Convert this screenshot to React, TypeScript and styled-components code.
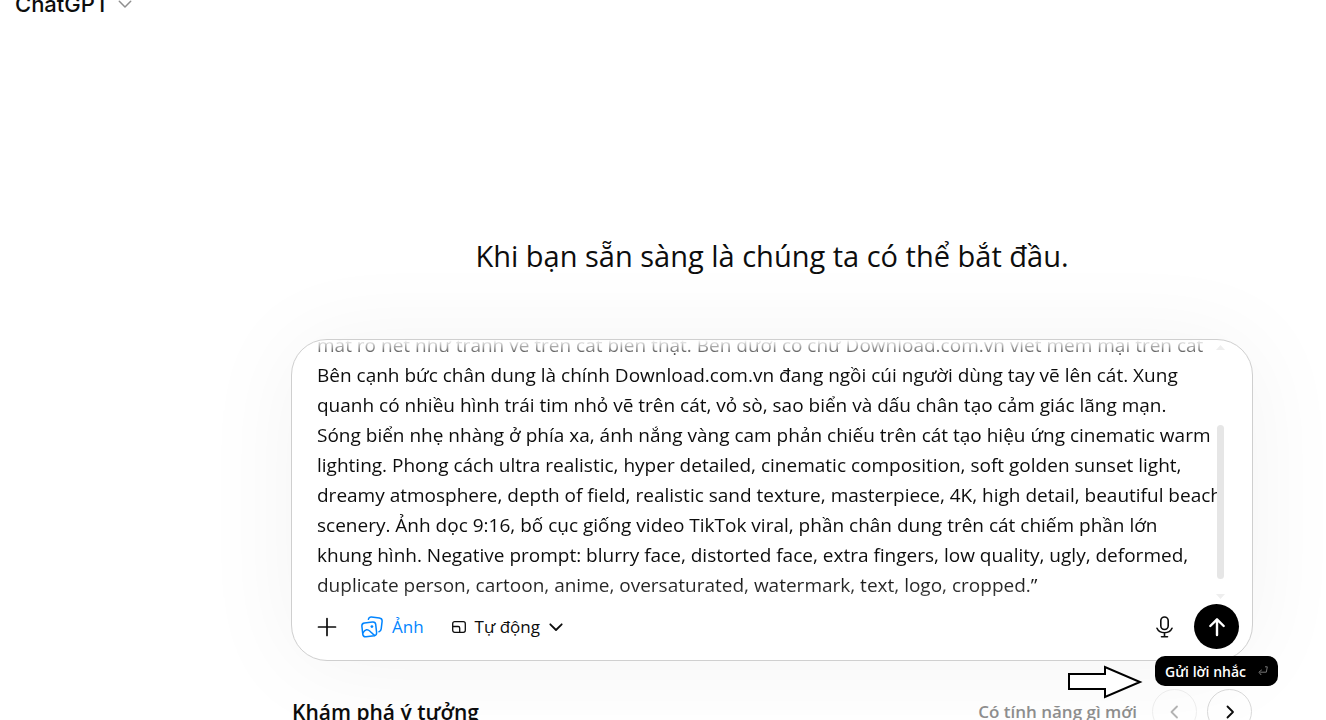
import React, { useLayoutEffect, useRef } from "react";
import styled, { createGlobalStyle, css } from "styled-components";

const GlobalStyle = createGlobalStyle`
  * { box-sizing: border-box; }
  body { margin: 0; background: #fff; color: #0d0d0d; font-family: "Open Sans", "Noto Sans", sans-serif; }
  button, textarea { font: inherit; color: inherit; margin: 0; padding: 0; border: 0; background: none; }
  button { cursor: pointer; }
`;

const Page = styled.div`
  height: 100vh;
  overflow: hidden;
  display: flex;
  flex-direction: column;
`;

const Header = styled.header`
  display: flex;
  margin-top: -16px;
  padding-left: 15px;
`;

const ModelButton = styled.button`
  display: flex;
  align-items: center;
  gap: 9px;
  height: 40px;
  font-family: Inter, sans-serif;
  font-size: 22px;
  font-weight: 500;
`;

const Main = styled.main`
  display: flex;
  flex-direction: column;
  align-items: center;
  padding: 208px 73px 0 291px;
`;

const Greeting = styled.h1`
  margin: 0;
  font-size: 29px;
  line-height: 48px;
  font-weight: 400;
  white-space: nowrap;
`;

const Composer = styled.form`
  position: relative;
  width: 100%;
  max-width: 962px;
  margin-top: 59px;
  border: 1px solid #cfcfcf;
  border-radius: 36px;
  background: #fff;
  box-shadow: 0 4px 100px rgba(0, 0, 0, 0.05);
`;

const PromptRow = styled.div`
  display: flex;
  justify-content: space-between;
  padding: 0 28px 0 25px;
`;

const Prompt = styled.textarea`
  flex: 1;
  display: block;
  height: 260px;
  font-size: 19px;
  line-height: 30px;
  resize: none;
  outline: none;
  overflow: hidden;
  white-space: pre;
  mask-image: linear-gradient(to bottom, transparent, rgba(0, 0, 0, 0.75) 14px, #000 24px, #000 236px, rgba(0, 0, 0, 0.75));
`;

const ScrollTrack = styled.div`
  display: flex;
  flex-direction: column;
  align-items: center;
  justify-content: space-between;
  width: 7px;
  padding: 5px 0 1px;
`;

const ScrollThumb = styled.div`
  width: 7px;
  height: 154px;
  margin-top: 60px;
  border-radius: 4px;
  background: #e6e6e6;
`;

const Toolbar = styled.div`
  display: flex;
  align-items: center;
  padding: 4px 13px 11px 25px;
  font-size: 17px;
  line-height: 45px;
`;

const ToolButton = styled.button<{ $accent?: boolean; $indent?: number }>`
  display: flex;
  align-items: center;
  gap: 9px;
  height: 45px;
  margin-left: ${(p) => p.$indent ?? 0}px;
  color: ${(p) => (p.$accent ? "#0285ff" : "#0d0d0d")};
`;

const SendArea = styled.div`
  position: relative;
  display: flex;
  align-items: center;
  gap: 21px;
  margin-left: auto;
`;

const circle = css`
  display: flex;
  align-items: center;
  justify-content: center;
  width: 45px;
  height: 45px;
  border-radius: 50%;
`;

const SendButton = styled.button`
  ${circle}
  background: #000;
  color: #fff;
`;

const Tooltip = styled.div`
  position: absolute;
  z-index: 1;
  top: 52px;
  right: -39px;
  display: flex;
  align-items: center;
  gap: 12px;
  height: 30px;
  padding: 0 10px;
  border-radius: 10px;
  background: #000;
  color: #fff;
  font-size: 14px;
  font-weight: 600;
  white-space: nowrap;
`;

const Pointer = styled.svg`
  position: absolute;
  top: 61px;
  right: 96px;
`;

const Ideas = styled.section`
  display: flex;
  align-items: center;
  gap: 10px;
  width: 100%;
  max-width: 962px;
  margin-top: 28px;
  padding: 0 1px;
`;

const IdeasTitle = styled.h2`
  margin: 0 auto 0 0;
  font-size: 21px;
  line-height: 30px;
  font-weight: 600;
`;

const NewsLink = styled.a`
  margin-right: 5px;
  color: #8f8f8f;
  font-size: 17px;
  font-weight: 600;
  line-height: 30px;
  text-decoration: none;
`;

const NavButton = styled.button`
  ${circle}
  && { border: 1px solid #d9d9d9; }
  &&:disabled { border-color: #efefef; color: #b4b4b4; }
`;

const Chevron = ({ d, size = 14, color = "currentColor", w = 1.8 }: { d: string; size?: number; color?: string; w?: number }) => (
  <svg width={size} height={size} viewBox="0 0 14 14" fill="none" stroke={color} strokeWidth={w} strokeLinecap="round" strokeLinejoin="round">
    <path d={d} />
  </svg>
);

const DOWN = "M1.3 4.3 7 10l5.7-5.7";

const promptText = [
  "mắt rõ nét như tranh vẽ trên cát biển thật. Bên dưới có chữ Download.com.vn viết mềm mại trên cát",
  "Bên cạnh bức chân dung là chính Download.com.vn đang ngồi cúi người dùng tay vẽ lên cát. Xung",
  "quanh có nhiều hình trái tim nhỏ vẽ trên cát, vỏ sò, sao biển và dấu chân tạo cảm giác lãng mạn.",
  "Sóng biển nhẹ nhàng ở phía xa, ánh nắng vàng cam phản chiếu trên cát tạo hiệu ứng cinematic warm",
  "lighting. Phong cách ultra realistic, hyper detailed, cinematic composition, soft golden sunset light,",
  "dreamy atmosphere, depth of field, realistic sand texture, masterpiece, 4K, high detail, beautiful beach",
  "scenery. Ảnh dọc 9:16, bố cục giống video TikTok viral, phần chân dung trên cát chiếm phần lớn",
  "khung hình. Negative prompt: blurry face, distorted face, extra fingers, low quality, ugly, deformed,",
  "duplicate person, cartoon, anime, oversaturated, watermark, text, logo, cropped.”",
].join("\n");

export default function App() {
  const promptRef = useRef<HTMLTextAreaElement>(null);

  // Keep the end of the prompt in view.
  useLayoutEffect(() => {
    const el = promptRef.current;
    if (el) el.scrollTop = el.scrollHeight;
  }, []);

  return (
    <Page>
      <GlobalStyle />
      <Header>
        <ModelButton type="button">
          ChatGPT <Chevron d={DOWN} color="#8f8f8f" w={1.5} />
        </ModelButton>
      </Header>
      <Main>
        <Greeting>Khi bạn sẵn sàng là chúng ta có thể bắt đầu.</Greeting>
        <Composer onSubmit={(e) => e.preventDefault()}>
          <PromptRow>
            <Prompt ref={promptRef} aria-label="Lời nhắc" spellCheck={false} defaultValue={promptText} />
            <ScrollTrack aria-hidden="true">
              <svg width="9" height="5" viewBox="0 0 9 5"><path d="M4.5 0 9 5H0z" fill="#eee" /></svg>
              <ScrollThumb />
              <svg width="9" height="5" viewBox="0 0 9 5"><path d="M4.5 5 9 0H0z" fill="#eee" /></svg>
            </ScrollTrack>
          </PromptRow>
          <Toolbar>
            <ToolButton type="button" aria-label="Thêm">
              <svg width="20" height="20" viewBox="0 0 20 20" fill="none" stroke="currentColor" strokeWidth="1.7" strokeLinecap="round">
                <path d="M10 1.5v17M1.5 10h17" />
              </svg>
            </ToolButton>
            <ToolButton type="button" $accent $indent={24}>
              <svg width="22" height="22" viewBox="0 0 22 22" fill="none" stroke="currentColor" strokeWidth="1.5" strokeLinecap="round" strokeLinejoin="round">
                <path d="M7.400 3.200C7.800 1.600 8.800.9 10.400 1.100l8 .9c2 .3 2.900 1.400 2.700 3.300l-.9 7.500c-.2 1.600-.8 2.600-2.200 3" />
                <path d="M3.500 7 11.500 6c2-.2 3 .6 3.200 2.400l.9 8c.2 2-.6 3-2.400 3.300l-8.200 1c-2 .2-3-.6-3.200-2.400l-.9-8C.7 8.300 1.700 7.200 3.500 7z" />
                <path d="M1.800 17.200C4 12.900 6.800 13.100 9 15.200c1.700 1.600 3 3.300 4.600 4.300" />
                <circle cx="10.900" cy="10.600" r="1.400" fill="currentColor" stroke="none" />
              </svg>
              Ảnh
            </ToolButton>
            <ToolButton type="button" $indent={28}>
              <svg width="14" height="12" viewBox="0 0 14 12" fill="none" stroke="currentColor" strokeWidth="1.3" strokeLinejoin="round">
                <rect x=".7" y=".7" width="12.600" height="10.600" rx="2" />
                <path d="M.7 5.500h5.500c1 0 1.500.5 1.500 1.500v4.300" />
              </svg>
              Tự động
              <Chevron d={DOWN} />
            </ToolButton>
            <SendArea>
              <ToolButton type="button" aria-label="Đọc chính tả">
                <svg width="17" height="22" viewBox="0 0 17 22" fill="none" stroke="currentColor" strokeWidth="1.600" strokeLinecap="round">
                  <rect x="4.800" y="1" width="7.400" height="12.500" rx="3.700" />
                  <path d="M1 12.300c1.300 3 4 4.400 7.500 4.400s6.200-1.400 7.500-4.400M8.500 16.700v4M5.500 20.700h6" />
                </svg>
              </ToolButton>
              <SendButton type="submit" aria-label="Gửi lời nhắc">
                <svg width="18" height="20" viewBox="0 0 18 20" fill="none" stroke="currentColor" strokeWidth="2.400" strokeLinecap="round" strokeLinejoin="round">
                  <path d="M9 18V2.500M2.300 9 9 2.300 15.700 9" />
                </svg>
              </SendButton>
              <Tooltip role="tooltip">
                Gửi lời nhắc
                <svg width="10" height="10" viewBox="0 0 10 10" fill="none" stroke="#777" strokeWidth="1">
                  <path d="M7 .8h2.300l-1 5.400H2.200M3.800 3.800.9 6.200l2.300 2.800" />
                </svg>
              </Tooltip>
              <Pointer width="76" height="34" viewBox="0 0 76 34" fill="#fff" stroke="#000" strokeWidth="2" aria-hidden="true">
                <path d="M2 9h36V2l35 15-35 15v-8H2z" />
              </Pointer>
            </SendArea>
          </Toolbar>
        </Composer>
        <Ideas>
          <IdeasTitle>Khám phá ý tưởng</IdeasTitle>
          <NewsLink href="#new">Có tính năng gì mới</NewsLink>
          <NavButton type="button" aria-label="Trước" disabled>
            <Chevron d="M9 1.500 3.500 7 9 12.500" />
          </NavButton>
          <NavButton type="button" aria-label="Sau">
            <Chevron d="M4.500 1.500 10 7l-5.500 5.500" />
          </NavButton>
        </Ideas>
      </Main>
    </Page>
  );
}
